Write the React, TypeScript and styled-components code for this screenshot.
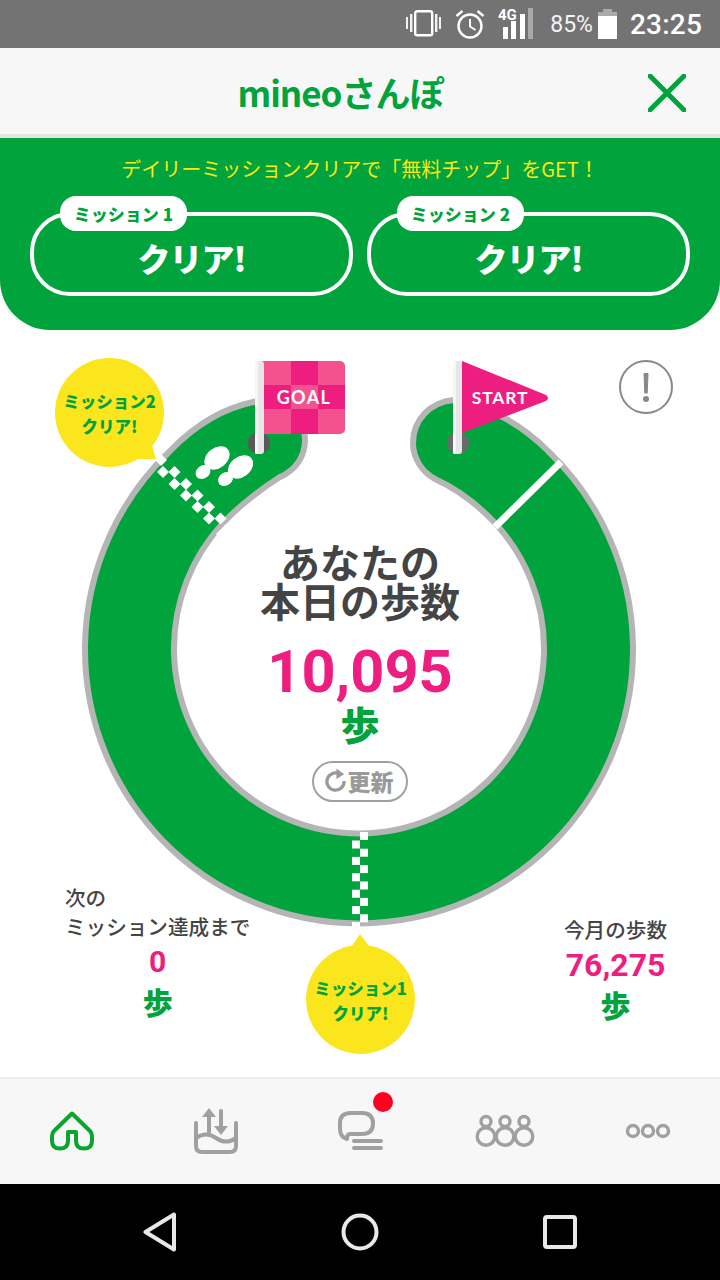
import React from "react";
import styled, { createGlobalStyle } from "styled-components";

const GREEN = "#00a33c";
const PINK = "#ee1e80";
const JP = `"Noto Sans CJK JP", "Noto Sans", sans-serif`;
const LATIN = `Roboto, "Noto Sans CJK JP", sans-serif`;

const GlobalStyle = createGlobalStyle`
  html, body {
    margin: 0;
    padding: 0;
    background: #fff;
    font-family: ${JP};
  }
`;

const Page = styled.div`
  width: 720px;
  height: 1280px;
  display: flex;
  flex-direction: column;
  overflow: hidden;
  background: #fff;
`;

// status bar
const StatusBar = styled.div`
  flex: none;
  height: 48px;
  background: #737373;
  display: flex;
  align-items: center;
  justify-content: flex-end;
  color: #fff;
  font-family: ${LATIN};
`;
const StatusIcon = styled.svg`
  display: block;
  flex: none;
  margin-right: ${p => p.$gap ?? 0}px;
`;
const Battery = styled.span`
  font-size: 23px;
  margin-right: 5px;
  color: #f4f4f4;
`;
const Clock = styled.span`
  font-size: 28px;
  font-weight: 500;
  margin-left: 13px;
  margin-right: 18px;
  letter-spacing: 0.2px;
`;

// header
const Header = styled.header`
  position: relative;
  flex: none;
  box-sizing: border-box;
  height: 90px;
  padding-right: 39px;
  background: #f7f7f7;
  border-bottom: 4px solid #e4e4e4;
  display: flex;
  align-items: center;
  justify-content: center;
`;
const Title = styled.h1`
  margin: 0;
  font-family: ${JP};
  font-size: 35px;
  font-weight: 700;
  color: ${GREEN};
  letter-spacing: -1px;
`;
const CloseIcon = styled.svg`
  position: absolute;
  right: 34px;
  top: 26px;
`;

// mission panel
const MissionPanel = styled.section`
  flex: none;
  height: 192px;
  box-sizing: border-box;
  background: ${GREEN};
  border-radius: 0 0 50px 50px;
  padding-top: 16px;
  text-align: center;
`;
const Lead = styled.p`
  margin: 0;
  font-size: 20px;
  line-height: 30px;
  color: #fbe914;
`;
const MissionRow = styled.div`
  display: flex;
  justify-content: space-between;
  margin: 28px 30px 0;
`;
const MissionCard = styled.div`
  position: relative;
  box-sizing: border-box;
  width: 323px;
  height: 84px;
  padding-top: 8px;
  border: 4px solid #fff;
  border-radius: 40px;
  display: flex;
  align-items: center;
  justify-content: center;
  color: #fff;
  font-size: 33px;
  font-weight: 900;
  letter-spacing: -1px;
`;
const MissionTag = styled.span`
  position: absolute;
  left: 26px;
  top: -20px;
  width: 127px;
  height: 35px;
  border-radius: 16px;
  background: #fff;
  color: ${GREEN};
  font-size: 17px;
  font-weight: 900;
  line-height: 35px;
  letter-spacing: 0;
`;

// course
const Stage = styled.main`
  position: relative;
  flex: none;
  height: 747px;
  box-sizing: border-box;
  display: flex;
  justify-content: space-between;
  align-items: flex-end;
  padding: 0 53px 58px 65px;
`;
const CourseSvg = styled.svg`
  position: absolute;
  left: 0;
  top: 0;
`;
const Today = styled.div`
  position: absolute;
  left: 0;
  right: 0;
  top: 212px;
  display: flex;
  flex-direction: column;
  align-items: center;
`;
const TodayLabel = styled.div`
  font-size: 40px;
  line-height: 39px;
  font-weight: 700;
  color: #444;
  text-align: center;
`;
const TodayValue = styled.div`
  margin-top: 16px;
  font-family: ${LATIN};
  font-size: 59.5px;
  line-height: 72px;
  font-weight: 700;
  color: ${PINK};
`;
const Unit = styled.div`
  font-size: ${p => p.$size}px;
  line-height: ${p => p.$size + 6}px;
  margin-top: ${p => p.$lift ?? 0}px;
  font-weight: 900;
  color: ${GREEN};
  text-align: center;
`;
const RefreshButton = styled.div`
  box-sizing: border-box;
  width: 96px;
  height: 41px;
  margin-top: 15px;
  padding: 0 3px 2px 0;
  border: 2px solid #a0a0a0;
  border-radius: 21px;
  display: flex;
  align-items: center;
  justify-content: center;
  gap: 1px;
  color: #9a9a9a;
  font-size: 23px;
  font-weight: 900;
`;
const Bubble = styled.div`
  position: absolute;
  left: ${p => p.$x}px;
  top: ${p => p.$y}px;
  box-sizing: border-box;
  width: 109px;
  height: 109px;
  padding-top: 3px;
  border-radius: 50%;
  background: #fbe61e;
  display: flex;
  align-items: center;
  justify-content: center;
  text-align: center;
  color: ${GREEN};
  font-size: 16.5px;
  line-height: 25px;
  font-weight: 900;
`;
const Stat = styled.div`
  position: relative;
  display: flex;
  flex-direction: column;
  margin-bottom: ${p => p.$drop ? -p.$drop : 0}px;
`;
const StatLabel = styled.div`
  font-size: 20.6px;
  line-height: 29px;
  font-weight: 500;
  color: #444;
  text-align: ${p => p.$align};
`;
const StatValue = styled.div`
  font-family: ${LATIN};
  font-size: ${p => p.$size}px;
  line-height: 42px;
  font-weight: 700;
  color: ${PINK};
  text-align: center;
`;

// tab bar
const TabBar = styled.nav`
  flex: none;
  height: 107px;
  box-sizing: border-box;
  background: #f7f7f7;
  border-top: 2px solid #ececec;
  display: grid;
  grid-template-columns: repeat(5, 1fr);
`;
const Tab = styled.div`
  position: relative;
  display: flex;
  align-items: center;
  justify-content: center;
  padding-bottom: 1px;
`;
const Badge = styled.span`
  position: absolute;
  left: 85px;
  top: 13px;
  width: 20px;
  height: 20px;
  border-radius: 50%;
  background: #ff0022;
`;

// android nav
const SystemNav = styled.div`
  flex: 1;
  background: #000;
  display: grid;
  grid-template-columns: 1fr 1fr 1fr;
  padding: 0 60px;
`;
const SystemKey = styled.div`
  display: flex;
  align-items: center;
  justify-content: center;
`;

const CHECKER_LEFT = [
  [163, 472], [174.5, 472], [174.5, 484], [186, 484], [186, 495.5],
  [197.5, 495.5], [197.5, 507], [209, 507], [209, 518.5], [220.5, 518.5],
];

const Course = () => (
  <CourseSvg width="720" height="747" viewBox="0 330 720 747">
    <path
      d="M454 400C430 402 413 420 413 443C413 458 422 472 435 479C457 489 478 505 495 523A185 185 0 1 1 223 523C240 505 258 491 280 477C296 470 305 456 305 440C305 418 285 398 258 401C225 407 195 425 170 451A274 274 0 1 0 548 451C523 426 490 406 454 400Z"
      fill={GREEN}
      stroke="#b5b5b5"
      strokeWidth="6"
    />
    {/* start line */}
    <line x1="561" y1="462" x2="495" y2="527" stroke="#fff" strokeWidth="7" />

    {/* checker, mission 1 */}
    <rect x="360" y="832" width="8" height="8" fill="#fff" />
    {[0, 1, 2, 3, 4].map(i => (
      <g key={i} fill="#fff">
        <rect x="352" y={840.5 + i * 16.4} width="8" height="8" />
        <rect x="360" y={848.7 + i * 16.4} width="8" height="8" />
      </g>
    ))}
    <rect x="352" y="922" width="8" height="8" fill="#fff" />

    {/* checker, mission 2 */}
    <polygon points="152,457 158,451 167,460 161,466" fill="#fff" />
    <polygon points="220,530 226,524 232,530 222,540 216,534" fill="#fff" />
    {CHECKER_LEFT.map(([x, y]) => (
      <polygon key={`${x}-${y}`} points={`${x - 6},${y} ${x},${y - 6} ${x + 6},${y} ${x},${y + 6}`} fill="#fff" />
    ))}

    {/* footprints */}
    <g fill="#fff">
      <ellipse cx="217" cy="458" rx="14" ry="10" transform="rotate(-38 217 458)" />
      <ellipse cx="203" cy="472" rx="8" ry="6.5" transform="rotate(-38 203 472)" />
      <ellipse cx="240.5" cy="467" rx="14" ry="10" transform="rotate(-38 240.5 467)" />
      <ellipse cx="225.5" cy="479" rx="8" ry="6.5" transform="rotate(-38 225.5 479)" />
    </g>

    {/* goal flag */}
    <ellipse cx="259" cy="443" rx="11" ry="11" fill="#595959" />
    <g>
      <rect x="258" y="361" width="87" height="73" rx="5" fill="#f4518f" />
      <rect x="291" y="361" width="27" height="24" fill={PINK} />
      <rect x="264" y="385" width="27" height="24" fill={PINK} />
      <rect x="318" y="385" width="27" height="24" fill={PINK} />
      <rect x="291" y="409" width="27" height="25" fill={PINK} />
      <text x="304" y="404" textAnchor="middle" fontFamily="Lato, Roboto, sans-serif" fontWeight="700" fontSize="18" letterSpacing="1.4" fill="#fff">GOAL</text>
    </g>
    <rect x="255" y="361" width="9" height="93" rx="3" fill="#e6e6e6" />
    <rect x="255" y="361" width="3" height="93" rx="1.5" fill="#f6f6f6" />

    {/* start flag */}
    <ellipse cx="458" cy="443" rx="11" ry="11" fill="#6a6a6a" />
    <path d="M462 361L546 395Q550 398 546 401L462 433Z" fill={PINK} />
    <text x="500" y="404" textAnchor="middle" fontFamily="Lato, Roboto, sans-serif" fontWeight="700" fontSize="17.5" letterSpacing="0.8" fill="#fff">START</text>
    <rect x="453" y="361" width="9" height="93" rx="3" fill="#e6e6e6" />
    <rect x="453" y="361" width="3" height="93" rx="1.5" fill="#f6f6f6" />

    {/* bubble tails */}
    <polygon points="136,459 151,442 156,459" fill="#fbe61e" />
    <polygon points="360,934 349,950 372,950" fill="#fbe61e" />

    {/* info */}
    <circle cx="646" cy="387" r="26" fill="none" stroke="#888" strokeWidth="2" />
    <path d="M644 373.5H648L647.2 393H644.8Z" fill="#888" stroke="#888" strokeWidth="1" strokeLinejoin="round" />
    <circle cx="646" cy="399" r="3" fill="#888" />
  </CourseSvg>
);

const GREY = "#a0a0a0";

const App: React.FC = () => (
  <Page>
    <GlobalStyle />
    <StatusBar>
      <StatusIcon width="36" height="28" viewBox="0 0 36 28" $gap={13}>
        <rect x="9.2" y="1.2" width="17" height="24" rx="2" fill="none" stroke="#fff" strokeWidth="2.4" />
        <g fill="#f2f2f2">
          <rect x="0" y="7" width="2" height="12" />
          <rect x="4" y="4" width="2.4" height="18" />
          <rect x="29" y="4" width="2.4" height="18" />
          <rect x="33" y="7" width="2" height="12" />
        </g>
      </StatusIcon>
      <StatusIcon width="30" height="30" viewBox="0 0 30 30" $gap={12}>
        <circle cx="15" cy="17" r="11.5" fill="none" stroke="#fff" strokeWidth="2.4" />
        <path d="M15 10V17.5L20.5 21" fill="none" stroke="#fff" strokeWidth="2" />
        <path d="M1.5 7L7.5 2M28.5 7L22.5 2" fill="none" stroke="#fff" strokeWidth="2.4" />
      </StatusIcon>
      <StatusIcon width="38" height="34" viewBox="0 0 38 34" $gap={15}>
        <text x="1" y="13" fontFamily="'Liberation Sans Narrow', Roboto, sans-serif" fontWeight="700" fontSize="15" fill="#fff">4G</text>
        <rect x="6" y="20" width="5" height="12" fill="#fff" />
        <rect x="14" y="14" width="5" height="18" fill="#fff" />
        <rect x="23" y="7" width="5" height="25" fill="#fff" />
        <rect x="31" y="1" width="5" height="31" fill="#aaa" />
      </StatusIcon>
      <Battery>85%</Battery>
      <StatusIcon width="19" height="30" viewBox="0 0 19 30">
        <rect x="5" y="0" width="9" height="4" fill="#aaa" />
        <rect x="0" y="3" width="19" height="4" fill="#aaa" />
        <rect x="0" y="7" width="19" height="23" fill="#fff" />
      </StatusIcon>
      <Clock>23:25</Clock>
    </StatusBar>

    <Header>
      <Title>mineoさんぽ</Title>
      <CloseIcon width="38" height="38" viewBox="0 0 38 38">
        <path d="M2 2L36 36M36 2L2 36" stroke={GREEN} strokeWidth="5" strokeLinecap="round" />
      </CloseIcon>
    </Header>

    <MissionPanel>
      <Lead>デイリーミッションクリアで「無料チップ」をGET！</Lead>
      <MissionRow>
        {[1, 2].map(n => (
          <MissionCard key={n}>
            <MissionTag>ミッション {n}</MissionTag>
            クリア!
          </MissionCard>
        ))}
      </MissionRow>
    </MissionPanel>

    <Stage>
      <Course />
      <Today>
        <TodayLabel>
          あなたの
          <br />
          本日の歩数
        </TodayLabel>
        <TodayValue>10,095</TodayValue>
        <Unit $size={39} $lift={-7}>歩</Unit>
        <RefreshButton>
          <svg width="23" height="26" viewBox="0 0 24 26">
            <path d="M16 5.5A9 9 0 1 0 21 13" fill="none" stroke="#9a9a9a" strokeWidth="3.4" />
            <polygon points="13,0 21,6 13,11" fill="#9a9a9a" />
          </svg>
          更新
        </RefreshButton>
      </Today>
      <Bubble $x={55} $y={28}>
        ミッション2
        <br />
        クリア!
      </Bubble>
      <Bubble $x={306} $y={615}>
        ミッション1
        <br />
        クリア!
      </Bubble>
      <Stat>
        <StatLabel $align="left">
          次の
          <br />
          ミッション達成まで
        </StatLabel>
        <StatValue $size={30}>0</StatValue>
        <Unit $size={30}>歩</Unit>
      </Stat>
      <Stat $drop={3}>
        <StatLabel $align="center">今月の歩数</StatLabel>
        <StatValue $size={32}>76,275</StatValue>
        <Unit $size={30}>歩</Unit>
      </Stat>
    </Stage>

    <TabBar>
      <Tab>
        <svg width="46" height="40" viewBox="0 0 46 40">
          <path
            d="M23 2.5L5 20Q3 22 3 25V30Q3 37.5 11 37.5Q19 37.5 19 30V21H27V30Q27 37.5 35 37.5Q43 37.5 43 30V25Q43 22 41 20Z"
            fill="none"
            stroke="#0aa52e"
            strokeWidth="4"
            strokeLinejoin="round"
          />
        </svg>
      </Tab>
      <Tab>
        <svg width="44" height="46" viewBox="0 0 44 46">
          <g fill="none" stroke={GREY} strokeWidth="4" strokeLinecap="round">
            <path d="M2 15V38Q2 44 8 44H36Q42 44 42 38V15" />
            <path d="M2 30Q12 23 22 30T42 30" />
            <path d="M15 24V7M27 3V20" />
          </g>
          <polygon points="15,0 8,9 22,9" fill={GREY} />
          <polygon points="27,27 20,18 34,18" fill={GREY} />
        </svg>
      </Tab>
      <Tab>
        <svg width="46" height="40" viewBox="0 0 46 40">
          <g fill="none" stroke={GREY} strokeWidth="4" strokeLinecap="round" strokeLinejoin="round">
            <path d="M14 2H25Q36 2 36 12.5T25 23H13Q10 23 10 28Q3 26 3 18V12Q3 2 14 2Z" />
            <path d="M17 30H44M17 37H44" />
          </g>
        </svg>
        <Badge />
      </Tab>
      <Tab>
        <svg width="62" height="34" viewBox="-3 0 62 34">
          <g fill="none" stroke={GREY} strokeWidth="3.4">
            {[10, 29, 48].map(x => (
              <g key={x}>
                <circle cx={x} cy="7.5" r="5" />
                <circle cx={x} cy="22.5" r="8.8" />
              </g>
            ))}
          </g>
        </svg>
      </Tab>
      <Tab>
        <svg width="46" height="18" viewBox="0 0 46 18">
          <g fill="none" stroke={GREY} strokeWidth="3.4">
            <circle cx="8" cy="9" r="5.5" />
            <circle cx="23" cy="9" r="5.5" />
            <circle cx="38" cy="9" r="5.5" />
          </g>
        </svg>
      </Tab>
    </TabBar>

    <SystemNav>
      <SystemKey>
        <svg width="34" height="40" viewBox="0 0 34 40">
          <path d="M31 2.5V37.5L2.5 20Z" fill="none" stroke="#e8e8e8" strokeWidth="4" strokeLinejoin="round" />
        </svg>
      </SystemKey>
      <SystemKey>
        <svg width="38" height="38" viewBox="0 0 38 38">
          <circle cx="19" cy="19" r="16.5" fill="none" stroke="#e8e8e8" strokeWidth="4" />
        </svg>
      </SystemKey>
      <SystemKey>
        <svg width="34" height="34" viewBox="0 0 34 34">
          <rect x="2" y="2" width="30" height="30" rx="2" fill="none" stroke="#e8e8e8" strokeWidth="4" />
        </svg>
      </SystemKey>
    </SystemNav>
  </Page>
);

export default App;
